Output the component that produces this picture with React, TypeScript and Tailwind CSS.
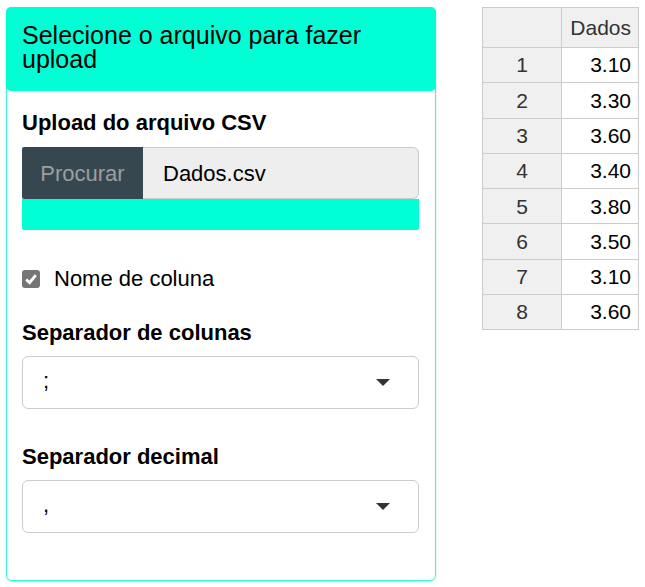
import React from "react";

const rows = ["3.10", "3.30", "3.60", "3.40", "3.80", "3.50", "3.10", "3.60"];

function Caret() {
  return (
    <svg width="14" height="7" viewBox="0 0 14 7" className="absolute right-[28px] top-[22px]">
      <path d="M0 0 L14 0 L7 7 Z" fill="#333" />
    </svg>
  );
}

function SelectBox(props: { value: string }) {
  return (
    <div className="relative mt-[10px] h-[53px] rounded-[6px] border border-[#cccccc] bg-white pl-[20px] pt-[11px] text-[22px] leading-[26px]">
      {props.value}
      <Caret />
    </div>
  );
}

export default function App() {
  return (
    <div className="flex min-h-[587px] w-[645px] items-start bg-white pl-[6px] pt-[7px] font-['Liberation_Sans',Arial,sans-serif] text-black">
      {/* sidebar panel */}
      <div className="w-[430px] rounded-[6px] border border-[#3ff5d8] shadow-[0_1px_2px_rgba(0,200,170,0.35)]">
        <div className="-m-px h-[84px] rounded-[5px] bg-[#00ffd5] px-[16px] pt-[16px] text-[25px] leading-[24px]">
          Selecione o arquivo para fazer upload
        </div>

        <div className="pb-[47px] pl-[15px] pr-[16px] pt-[20px]">
          <div className="text-[22px] font-bold leading-[26px]">Upload do arquivo CSV</div>
          <div className="mt-[11px] flex h-[52px]">
            <div className="flex w-[121px] items-center justify-center rounded-l-[2px] bg-[#37474f] text-[22px] text-[#9e9e9e]">
              Procurar
            </div>
            <div className="flex flex-1 items-center rounded-r-[6px] border border-l-0 border-[#cccccc] bg-[#eeeeee] pl-[20px] text-[22px]">
              Dados.csv
            </div>
          </div>
          <div className="h-[31px] rounded-b-[2px] bg-[#00ffd5]" />

          <div className="mt-[36px] flex h-[26px] items-center gap-[14px] text-[22px] leading-[26px]">
            <span className="flex h-[18px] w-[18px] items-center justify-center rounded-[3px] bg-[#767676]">
              <svg width="14" height="14" viewBox="0 0 14 14">
                <path d="M2.2 7.4 L5.6 10.6 L11.8 3.2" stroke="white" strokeWidth="2.8" fill="none" />
              </svg>
            </span>
            Nome de coluna
          </div>

          <div className="mt-[28px] text-[22px] font-bold leading-[26px]">Separador de colunas</div>
          <SelectBox value=";" />

          <div className="mt-[35px] text-[22px] font-bold leading-[26px]">Separador decimal</div>
          <SelectBox value="," />
        </div>
      </div>

      {/* data table */}
      <table className="ml-[46px] w-[157px] border-collapse text-[21px]">
        <thead>
          <tr className="h-[40px] bg-[#f0f0f0]">
            <th className="w-[79px] border border-[#cccccc]" />
            <th className="border border-[#cccccc] pr-[7px] text-right font-normal text-[#333]">Dados</th>
          </tr>
        </thead>
        <tbody>
          {rows.map((v, i) => (
            <tr key={i} className="h-[35.3px]">
              <td className="border border-[#cccccc] bg-[#f0f0f0] text-center text-[#333]">{i + 1}</td>
              <td className="border border-[#cccccc] bg-white pr-[7px] text-right">{v}</td>
            </tr>
          ))}
        </tbody>
      </table>
    </div>
  );
}
